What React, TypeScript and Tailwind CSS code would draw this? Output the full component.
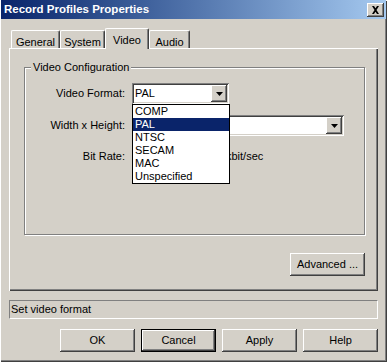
import React from "react";

const raised =
  "shadow-[inset_-1px_-1px_#404040,inset_1px_1px_#ffffff,inset_-2px_-2px_#808080,inset_2px_2px_#d4d0c8]";
const sunken =
  "shadow-[inset_1px_1px_#808080,inset_-1px_-1px_#ffffff,inset_2px_2px_#404040,inset_-2px_-2px_#d4d0c8]";

const tabs = [
  { name: "General", w: "w-[49px]" },
  { name: "System", w: "w-[45px]" },
  { name: "Video", w: "w-[44px]", active: true },
  { name: "Audio", w: "w-[41px]" },
];

const formats = ["COMP", "PAL", "NTSC", "SECAM", "MAC", "Unspecified"];

const Arrow = () => (
  <svg width="7" height="4" viewBox="0 0 7 4">
    <path d="M0 0h7L3.5 4z" fill="#000" />
  </svg>
);

const Combo = ({ w, value }: { w: string; value?: string }) => (
  <div className={`${w} h-[21px] bg-white flex items-center ${sunken} p-[2px]`}>
    <span className="flex-1 pl-[1px] leading-none">{value}</span>
    <div className={`w-[16px] h-[17px] bg-[#d4d0c8] flex items-center justify-center ${raised}`}>
      <Arrow />
    </div>
  </div>
);

const Btn = ({ label, def }: { label: string; def?: boolean }) => (
  <div
    className={`w-[75px] h-[23px] flex items-center justify-center ${
      def ? "border border-black" : ""
    }`}>
    <div className={`w-full h-full flex items-center justify-center ${raised}`}>{label}</div>
  </div>
);

export default function App() {
  return (
    <div className="relative w-[387px] h-[362px] bg-[#d4d0c8] text-[11px] text-black font-['Liberation_Sans',Arial,sans-serif] shadow-[inset_1px_1px_#ffffff,inset_-1px_-1px_#404040,inset_-2px_-2px_#808080] overflow-hidden">
      {/* title bar */}
      <div className="h-[19px] ml-[1px] mr-[1px] flex items-center pl-[3px] pr-[2px] bg-gradient-to-r from-[#0a246a] to-[#a6caf0]">
        <span className="flex-1 text-white font-bold text-[11.5px] leading-none">
          Record Profiles Properties
        </span>
        <div className={`w-[17px] h-[14px] bg-[#d4d0c8] flex items-center justify-center ${raised}`}>
          <svg width="9" height="8" viewBox="0 0 9 8">
            <path d="M1 0h2l1.5 2.3L6 0h2L5.5 4 8 8H6L4.5 5.7 3 8H1l2.5-4z" fill="#000" />
          </svg>
        </div>
      </div>

      <div className="px-[9px] pt-[9px]">
        {/* tabs */}
        <div className="flex items-end h-[20px] pl-[2px] relative z-10">
          {tabs.map((t) =>
            t.active ? (
              <div
                key={t.name}
                className={`${t.w} h-[21px] -mb-[1px] bg-[#d4d0c8] border-l border-t border-r border-l-white border-t-white border-r-[#404040] rounded-t-[2px] shadow-[inset_-1px_0_#808080] flex justify-center pt-[3px]`}>
                {t.name}
              </div>
            ) : (
              <div
                key={t.name}
                className={`${t.w} h-[18px] bg-[#d4d0c8] border-l border-t border-r border-l-white border-t-white border-r-[#404040] rounded-t-[2px] shadow-[inset_-1px_0_#808080] flex justify-center pt-[3px]`}>
                {t.name}
              </div>
            )
          )}
        </div>

        {/* tab panel */}
        <div className="h-[243px] shadow-[inset_1px_1px_#ffffff,inset_-1px_-1px_#404040,inset_-2px_-2px_#808080] pt-[19px] pl-[15px]">
          <div className="relative w-[341px] h-[168px] border border-[#808080] shadow-[1px_1px_#ffffff,inset_1px_1px_#ffffff]">
            <span className="absolute -top-[7px] left-[6px] px-[2px] bg-[#d4d0c8] leading-[13px]">
              Video Configuration
            </span>
            <div className="flex flex-col pt-[15px]">
              <div className="flex items-center">
                <span className="w-[100px] text-right">Video Format:</span>
                <div className="ml-[7px]">
                  <Combo w="w-[97px]" value="PAL" />
                </div>
              </div>
              <div className="flex items-center mt-[11px]">
                <span className="w-[100px] text-right">Width x Height:</span>
                <div className="ml-[7px]">
                  <Combo w="w-[212px]" />
                </div>
              </div>
              <div className="flex items-center mt-[10px]">
                <span className="w-[100px] text-right">Bit Rate:</span>
                <div className={`ml-[7px] w-[90px] h-[21px] bg-white ${sunken}`} />
                <span className="ml-[4px]">kbit/sec</span>
              </div>
            </div>
          </div>
          <div className="flex mt-[18px] ml-[266px]">
            <Btn label="Advanced ..." />
          </div>
        </div>

        {/* status */}
        <div className="mt-[9px] h-[19px] border border-t-[#808080] border-l-[#808080] border-b-white border-r-white flex items-center pl-[1px]">
          Set video format
        </div>

        {/* buttons */}
        <div className="flex justify-end gap-[6px] mt-[10px]">
          <Btn label="OK" />
          <Btn label="Cancel" def />
          <Btn label="Apply" />
          <Btn label="Help" />
        </div>
      </div>

      {/* open dropdown list */}
      <div className="absolute left-[132px] top-[104px] w-[98px] h-[80px] bg-white border border-black z-20">
        {formats.map((f) => (
          <div
            key={f}
            className={`h-[13px] leading-[13px] pl-[2px] ${
              f === "PAL" ? "bg-[#0a246a] text-white" : ""
            }`}>
            {f}
          </div>
        ))}
      </div>
    </div>
  );
}
